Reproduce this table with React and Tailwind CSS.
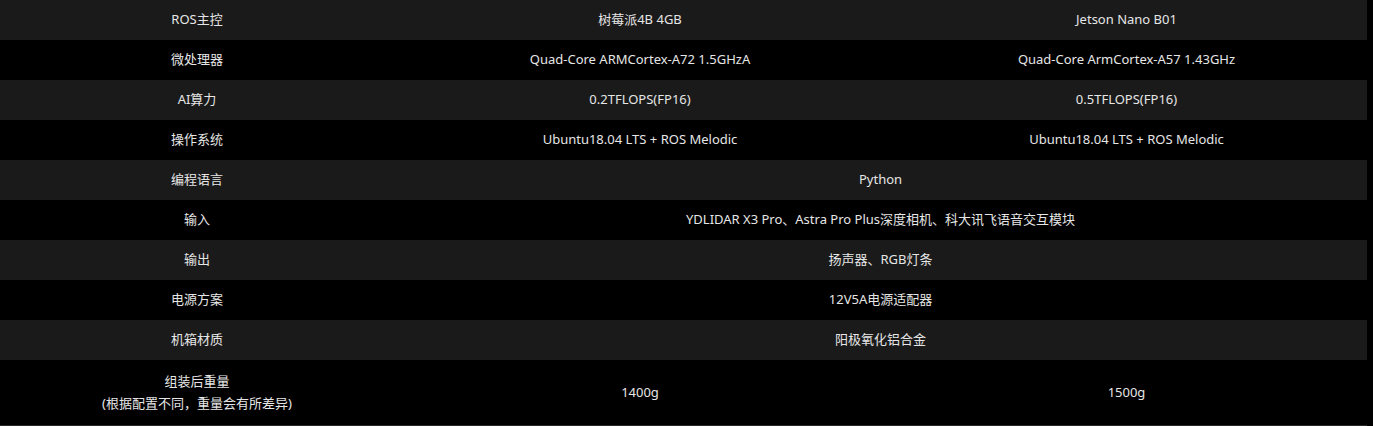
const rows = [
  { label: "ROS主控", a: "树莓派4B 4GB", b: "Jetson Nano B01" },
  { label: "微处理器", a: "Quad-Core ARMCortex-A72 1.5GHzA", b: "Quad-Core ArmCortex-A57 1.43GHz" },
  { label: "AI算力", a: "0.2TFLOPS(FP16)", b: "0.5TFLOPS(FP16)" },
  { label: "操作系统", a: "Ubuntu18.04 LTS + ROS Melodic", b: "Ubuntu18.04 LTS + ROS Melodic" },
  { label: "编程语言", all: "Python" },
  { label: "输入", all: "YDLIDAR X3 Pro、Astra Pro Plus深度相机、科大讯飞语音交互模块" },
  { label: "输出", all: "扬声器、RGB灯条" },
  { label: "电源方案", all: "12V5A电源适配器" },
  { label: "机箱材质", all: "阳极氧化铝合金" },
];

export default function App() {
  return (
    <div
      className="w-[1373px] h-[426px] bg-black text-[13px] text-[#e6e6e6] overflow-hidden"
      style={{ fontFamily: '"Noto Sans", "Noto Sans CJK SC", sans-serif' }}
    >
      <table className="w-[1367px] border-collapse table-fixed">
        <colgroup>
          <col className="w-[394px]" />
          <col className="w-[492px]" />
          <col />
        </colgroup>
        <tbody>
          {rows.map((r, i) => (
            <tr key={r.label} className={`h-10 ${i % 2 === 0 ? "bg-[#1a1a1a]" : "bg-black"}`}>
              <td className="text-center align-middle p-0">{r.label}</td>
              {r.all ? (
                <td colSpan={2} className="text-center align-middle p-0">
                  {r.all}
                </td>
              ) : (
                <>
                  <td className="text-center align-middle p-0">{r.a}</td>
                  <td className="text-center align-middle p-0">{r.b}</td>
                </>
              )}
            </tr>
          ))}
          <tr className="h-[65px] bg-black border-b border-[#2a2a2a]">
            <td className="text-center align-middle p-0 leading-[22px]">
              组装后重量
              <br />
              (根据配置不同，重量会有所差异)
            </td>
            <td className="text-center align-middle p-0">1400g</td>
            <td className="text-center align-middle p-0">1500g</td>
          </tr>
        </tbody>
      </table>
    </div>
  );
}
